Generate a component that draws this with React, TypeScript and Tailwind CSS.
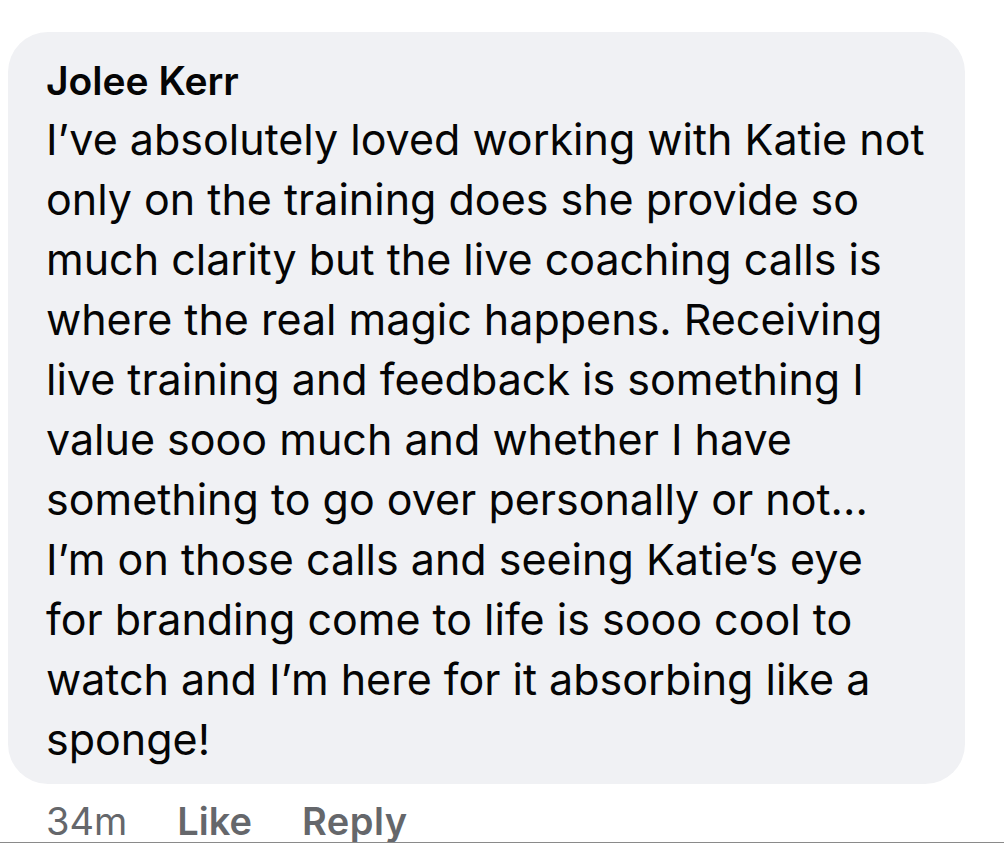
import React from 'react';

const lines = [
  'I\u2019ve absolutely loved working with Katie not',
  'only on the training does she provide so',
  'much clarity but the live coaching calls is',
  'where the real magic happens. Receiving',
  'live training and feedback is something I',
  'value sooo much and whether I have',
  'something to go over personally or not...',
  'I\u2019m on those calls and seeing Katie\u2019s eye',
  'for branding come to life is sooo cool to',
  'watch and I\u2019m here for it absorbing like a',
  'sponge!',
];

export default function App() {
  return (
    <div className="relative h-[843px] w-full overflow-hidden bg-white font-['Inter',sans-serif] text-[#050505]">
      {/* Comment bubble */}
      <div className="ml-[8px] mt-[32px] w-[957px] rounded-[40px] bg-[#f0f1f4] pb-[15px] pl-[38px] pr-[20px] pt-[21px]">
        <div className="text-[39px] font-semibold leading-[56px]">Jolee Kerr</div>
        <p className="text-[43px] leading-[60px]">
          {lines.map((l, i) => (
            <span key={i}>
              {l}
              {i < lines.length - 1 && <br />}
            </span>
          ))}
        </p>
      </div>

      {/* Actions */}
      <div className="mt-[13px] flex items-baseline pl-[46px] text-[38px] leading-[48px] text-[#65676b]">
        <span>34m</span>
        <span className="ml-[50px] font-semibold">Like</span>
        <span className="ml-[50px] font-semibold tracking-[0.5px]">Reply</span>
      </div>

      <div className="absolute bottom-0 left-0 h-px w-full bg-[#8a8a8a]" />
    </div>
  );
}
